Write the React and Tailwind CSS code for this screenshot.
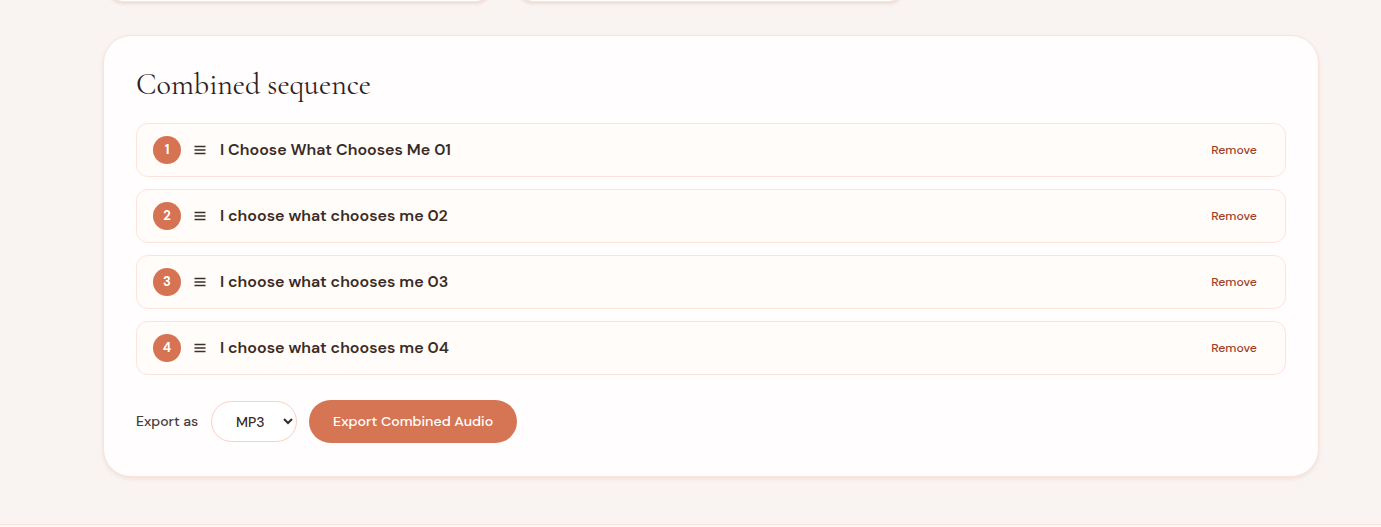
import React, { useState } from 'react';

const tracks = [
  'I Choose What Chooses Me 01',
  'I choose what chooses me 02',
  'I choose what chooses me 03',
  'I choose what chooses me 04',
];

function HandleIcon() {
  return (
    <svg width="12" height="10" viewBox="0 0 12 10" className="shrink-0 text-[#3d2f2a]">
      <path d="M0.5 1.5h11M0.5 5h11M0.5 8.5h11" stroke="currentColor" strokeWidth="1.3" />
    </svg>
  );
}

function SequenceRow({ index, title }) {
  return (
    <div className="flex items-center h-[54px] pl-4 pr-7 rounded-xl border border-[#fde4da] bg-[#fffcf9]">
      <span className="size-7 rounded-full bg-[#d57352] text-white text-[13px] font-bold flex items-center justify-center shrink-0">
        {index}
      </span>
      <span className="ml-[13px]">
        <HandleIcon />
      </span>
      <span className="ml-[14px] text-[16px] font-semibold text-[#3a2b26]">{title}</span>
      <button type="button" className="ml-auto text-[12.3px] font-medium text-[#a03f27]">
        Remove
      </button>
    </div>
  );
}

export default function App() {
  const [format, setFormat] = useState('mp3');

  return (
    <div
      className="min-h-[527px] bg-[#f9f4f2] overflow-hidden"
      style={{ fontFamily: '"DM Sans", Inter, "Noto Sans", sans-serif' }}
    >
      <div className="flex gap-[25px] pl-[107px] -mt-[58px]">
        <div className="w-[385px] h-[60px] rounded-2xl bg-white border border-[#fbe2d8] shadow-[0_2px_3px_rgba(200,150,130,0.25)]" />
        <div className="w-[388px] h-[60px] rounded-2xl bg-white border border-[#fbe2d8] shadow-[0_2px_3px_rgba(200,150,130,0.25)]" />
      </div>

      <div className="ml-[103px] w-[1216px] mt-[33px] rounded-[28px] bg-[#fffdfd] border border-[#fde2d7] shadow-[0_2px_4px_rgba(190,140,120,0.18)] px-8 pt-[30px] pb-[33px]">
        <h2
          className="text-[30px] leading-[38px] text-[#2c2220] mb-[19px]"
          style={{ fontFamily: '"Cormorant Garamond", "Liberation Serif", serif' }}
        >
          Combined sequence
        </h2>

        <div className="flex flex-col gap-3">
          {tracks.map((t, i) => (
            <SequenceRow key={t} index={i + 1} title={t} />
          ))}
        </div>

        <div className="flex items-center mt-[25px]">
          <span className="text-[14px] font-medium text-[#4a3c37]">Export as</span>
          <select
            value={format}
            onChange={(e) => setFormat(e.target.value)}
            className="ml-[13px] w-[86px] h-[41px] rounded-full border border-[#fbd0c0] bg-white pl-5 pr-2 text-[14px] font-medium text-[#3a2b26]"
          >
            <option value="mp3">MP3</option>
            <option value="wav">WAV</option>
          </select>
          <button
            type="button"
            className="ml-3 h-[43px] px-6 rounded-full bg-[#d57553] text-white text-[14.2px] font-medium"
          >
            Export Combined Audio
          </button>
        </div>
      </div>

      <div className="mt-[47px] border-t border-[#fde2d7] bg-[#fbf7f5] h-[10px]" />
    </div>
  );
}
